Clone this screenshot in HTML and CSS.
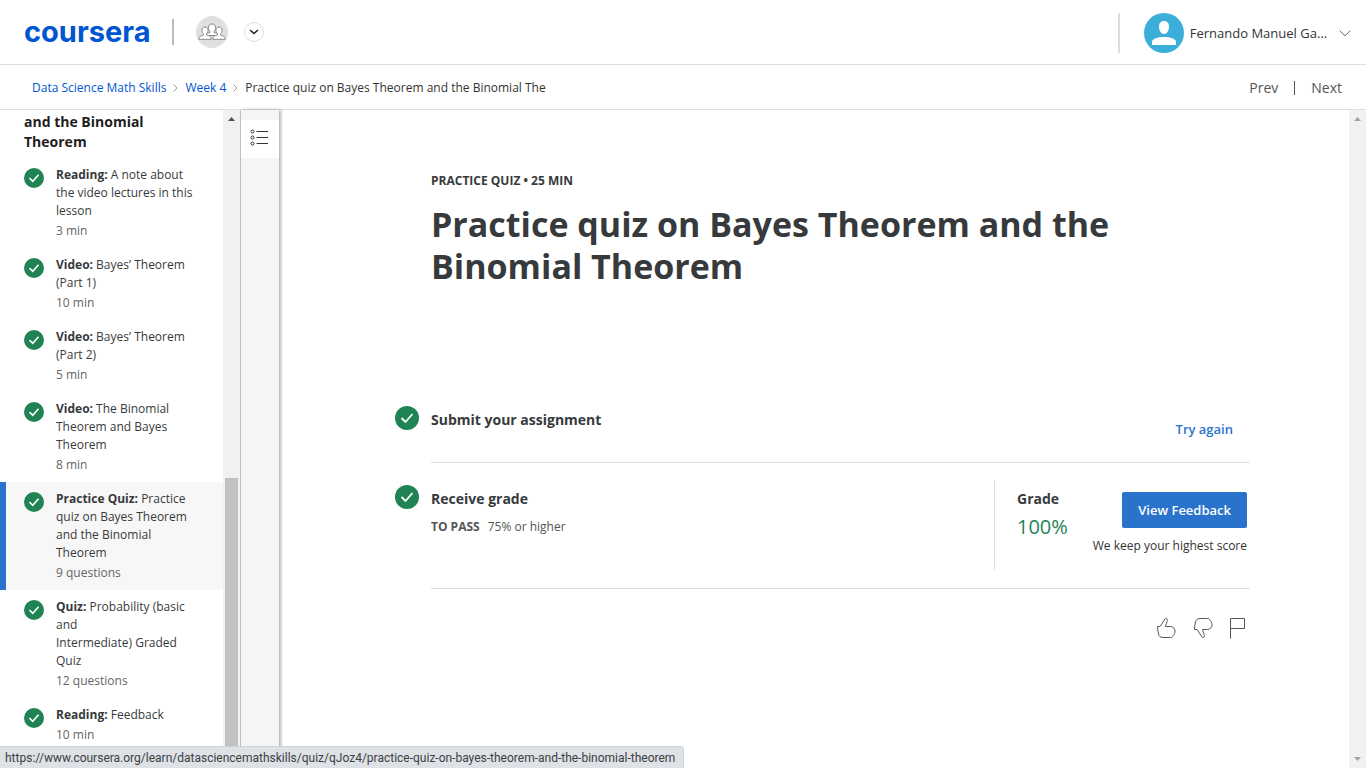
FILE: index.html
```html
<!DOCTYPE html>
<html lang="en">
<head>
<meta charset="utf-8">
<title>Practice quiz on Bayes Theorem and the Binomial Theorem | Coursera</title>
<link rel="stylesheet" href="styles.css">
</head>
<body>
<svg class="defs" aria-hidden="true">
  <symbol id="check" viewBox="0 0 24 24">
    <circle cx="12" cy="12" r="12" fill="#1f8354"/>
    <path d="M6.500 12l4 4 7-8" fill="none" stroke="#fff" stroke-width="1.800"/>
  </symbol>
</svg>
<header class="topbar">
  <a class="logo" href="#">coursera</a>
  <span class="topbar-rule"></span>
  <span class="group-badge">
    <svg width="28" height="18" viewBox="0 0 28 18" fill="#fff" stroke="#8a8a8a" stroke-width="1">
      <path d="M8 12.500c0-2 2-2.500 4-3v-1c-1-1-1.500-2-1.500-4 0-2.500 1.500-3.500 3.500-3.500s3.500 1 3.500 3.500c0 2-.5 3-1.500 4v1c2 .5 4 1 4 3z"/>
      <path d="M.8 16.300c0-3.200 2-3.600 4.700-4.300v-1.200C4.400 10 4 9 4 7.200 4 5 5.200 4 7 4s3 1 3 3.200c0 1.800-.4 2.800-1.500 3.600V12c2.700.7 4.700 1.100 4.700 4.300z"/>
      <path d="M14.800 16.300c0-3.200 2-3.600 4.700-4.300v-1.200C18.400 10 18 9 18 7.200 18 5 19.200 4 21 4s3 1 3 3.200c0 1.800-.4 2.800-1.500 3.600V12c2.700.7 4.700 1.100 4.700 4.300z"/>
    </svg>
  </span>
  <button class="switcher" type="button" aria-label="Switch program">
    <svg width="10" height="6" viewBox="0 0 10 6"><path d="M1 1l4 3.500L9 1" fill="none" stroke="#222" stroke-width="1.500"/></svg>
  </button>
  <button class="account" type="button">
    <svg class="avatar" width="40" height="40" viewBox="0 0 40 40">
      <circle cx="20" cy="20" r="20" fill="#3bafda"/>
      <path d="M20 8c3.500 0 5 2.500 5 5.500 0 4-2 7.500-5 7.500s-5-3.500-5-7.500C15 10.500 16.500 8 20 8zM8 32v-3c0-3.500 6-5 12-5s12 1.500 12 5v3z" fill="#fff"/>
    </svg>
    <span class="account-name">Fernando Manuel Ga…</span>
    <svg width="12" height="7" viewBox="0 0 12 7"><path d="M.7.7L6 5.800 11.300.7" fill="none" stroke="#666"/></svg>
  </button>
</header>

<div class="subbar">
  <nav class="crumbs" aria-label="Breadcrumb">
    <a href="#">Data Science Math Skills</a>
    <svg width="5" height="8" viewBox="0 0 5 8"><path d="M.5.500L4 4 .5 7.500" fill="none" stroke="#999"/></svg>
    <a href="#">Week 4</a>
    <svg width="5" height="8" viewBox="0 0 5 8"><path d="M.5.500L4 4 .5 7.500" fill="none" stroke="#999"/></svg>
    <span>Practice quiz on Bayes Theorem and the Binomial The</span>
  </nav>
  <nav class="pager" aria-label="Items">
    <a href="#">Prev</a><span class="pager-rule"></span><a href="#">Next</a>
  </nav>
</div>

<div class="workspace">
  <aside class="sidebar">
    <div class="lessons">
      <h2>and the Binomial Theorem</h2>
      <a class="item" href="#"><svg class="tick"><use href="#check"/></svg><span class="item-text"><b>Reading:</b> A note about the video lectures in this lesson<small>3 min</small></span></a>
      <a class="item" href="#"><svg class="tick"><use href="#check"/></svg><span class="item-text"><b>Video:</b> Bayes’ Theorem (Part 1)<small>10 min</small></span></a>
      <a class="item" href="#"><svg class="tick"><use href="#check"/></svg><span class="item-text"><b>Video:</b> Bayes’ Theorem (Part 2)<small>5 min</small></span></a>
      <a class="item" href="#"><svg class="tick"><use href="#check"/></svg><span class="item-text"><b>Video:</b> The Binomial Theorem and Bayes Theorem<small>8 min</small></span></a>
      <a class="item current" href="#" aria-current="page"><svg class="tick"><use href="#check"/></svg><span class="item-text"><b>Practice Quiz:</b> Practice quiz on Bayes Theorem and the Binomial Theorem<small>9 questions</small></span></a>
      <a class="item" href="#"><svg class="tick"><use href="#check"/></svg><span class="item-text"><b>Quiz:</b> Probability (basic and<br>Intermediate) Graded Quiz<small>12 questions</small></span></a>
      <a class="item" href="#"><svg class="tick"><use href="#check"/></svg><span class="item-text"><b>Reading:</b> Feedback<small>10 min</small></span></a>
    </div>
    <div class="scrollbar">
      <svg class="arrow dark" width="7" height="4" viewBox="0 0 7 4"><path d="M0 4L3.500 0 7 4z"/></svg>
      <span class="thumb"></span>
    </div>
  </aside>
  <div class="rail">
    <button type="button" aria-label="Toggle lesson list">
      <svg width="18" height="17" viewBox="0 0 18 17" fill="none" stroke="#333">
        <circle cx="2.500" cy="2.500" r="1.500"/><circle cx="2.500" cy="8.500" r="1.500"/><circle cx="2.500" cy="14.500" r="1.500"/>
        <path d="M6.500 2.500H18M6.500 8.500H18M6.500 14.500H18"/>
      </svg>
    </button>
  </div>
  <main class="content">
    <p class="kind">PRACTICE QUIZ • 25 MIN</p>
    <h1>Practice quiz on Bayes Theorem and the Binomial Theorem</h1>
    <section class="step submit">
      <svg class="step-tick"><use href="#check"/></svg>
      <h3>Submit your assignment</h3>
      <a class="again" href="#">Try again</a>
    </section>
    <section class="step grade-step">
      <svg class="step-tick"><use href="#check"/></svg>
      <div class="receive">
        <h3>Receive grade</h3>
        <p class="pass"><b>TO PASS</b><span>75% or higher</span></p>
      </div>
      <div class="grade">
        <div><h3>Grade</h3><p class="score">100%</p></div>
        <div class="feedback">
          <button type="button">View Feedback</button>
          <p>We keep your highest score</p>
        </div>
      </div>
    </section>
    <div class="reactions">
      <button type="button" aria-label="Like"><svg width="20" height="22" viewBox="0 0 20 22"><path d="M1.500 9.500H4L9 2c.6-1 2-.8 2.200.3.300 1.700-.2 3-1 4.700L9.500 9.500h5c2.500 0 4.500 2 4.500 4.700 0 1.500-.5 3-1.500 4l-1 1.500c-.5.700-1 .8-2 .8H7c-3 0-4-1.500-4.500-3.500-.6-2.500-1-5-1-7.500z"/></svg></button>
      <button type="button" aria-label="Dislike"><svg width="20" height="22" viewBox="0 0 20 22"><path d="M1.500 12.500H4L9 20c.6 1 2 .8 2.200-.3.300-1.700-.2-3-1-4.700L9.500 12.500h5c2.500 0 4.500-2 4.500-4.700 0-1.500-.5-3-1.500-4l-1-1.500c-.5-.7-1-.8-2-.8H7c-3 0-4 1.500-4.500 3.500-.6 2.500-1 5-1 7.500z"/></svg></button>
      <button type="button" aria-label="Report"><svg width="16" height="22" viewBox="0 0 16 22"><path d="M.5 21.500V1.500h14v10H.5"/></svg></button>
    </div>
  </main>
  <div class="scrollbar">
    <svg class="arrow" width="7" height="4" viewBox="0 0 7 4"><path d="M0 4L3.500 0 7 4z"/></svg>
    <svg class="arrow" width="7" height="4" viewBox="0 0 7 4"><path d="M0 0L3.500 4 7 0z"/></svg>
  </div>
</div>
<div class="status">https://www.coursera.org/learn/datasciencemathskills/quiz/qJoz4/practice-quiz-on-bayes-theorem-and-the-binomial-theorem</div>
</body>
</html>
```

FILE: styles.css
```css
* { box-sizing: border-box; }
body {
  margin: 0;
  height: 100vh;
  display: flex;
  flex-direction: column;
  overflow: hidden;
  background: #fff;
  color: #373a3c;
  font-family: "Open Sans", sans-serif;
  font-size: 12px;
  line-height: 18px;
}
h1, h2, h3, p { margin: 0; }
a { color: inherit; text-decoration: none; }
button { border: 0; padding: 0; background: none; font: inherit; color: inherit; cursor: pointer; }
svg { display: block; flex: none; }
.defs { position: absolute; width: 0; height: 0; }

.topbar {
  display: flex;
  align-items: center;
  flex: none;
  height: 65px;
  padding: 0 15px 0 24px;
  border-bottom: 1px solid #ddd;
}
.logo { color: #0056d2; font: 700 29px/36px Inter, sans-serif; }
.topbar-rule { width: 2px; height: 26px; margin: 0 22px; background: #bdbdbd; }
.group-badge {
  display: grid;
  place-items: center;
  width: 32px;
  height: 32px;
  border-radius: 50%;
  background: #e0e0e0;
}
.switcher {
  display: grid;
  place-items: center;
  width: 20px;
  height: 20px;
  margin-left: 16px;
  border: 1px solid #ddd;
  border-radius: 50%;
}
.account {
  display: flex;
  align-items: center;
  margin: 2px 0 0 auto;
  height: 40px;
  padding-left: 24px;
  border-left: 2px solid #ddd;
  font-size: 13px;
  color: #333;
}
.account-name {
  min-width: 134px;
  margin: 0 12px 0 6px;
  text-align: left;
  white-space: nowrap;
}

.subbar {
  display: flex;
  align-items: center;
  justify-content: space-between;
  flex: none;
  height: 45px;
  padding: 2px 24px 0 32px;
  border-bottom: 1px solid #ddd;
}
.crumbs { display: flex; align-items: center; gap: 7px; color: #333; }
.crumbs a { color: #0056d2; }
.pager { display: flex; align-items: center; font-size: 14px; color: #555; }
.pager-rule { width: 1px; height: 14px; margin: 0 16px; background: #555; }

.workspace { display: flex; flex: 1; min-height: 0; }
.sidebar { display: flex; flex: none; width: 241px; border-right: 1px solid #c4c4c4; }
.lessons { flex: 1; overflow: hidden; padding-top: 2px; }
.lessons h2 { padding: 0 56px 6px 24px; font-size: 14px; line-height: 20px; color: #1f1f1f; }
.item {
  display: flex;
  gap: 12px;
  padding: 8px 23px 8px 18px;
  border-left: 6px solid transparent;
}
.item.current { border-left-color: #2a73cc; background: #f7f7f7; }
.tick { width: 20px; height: 20px; margin-top: 2px; }
.item-text { flex: 1; }
.item small { display: block; padding-top: 2px; font-size: 12px; color: #666; }

.scrollbar {
  display: flex;
  flex-direction: column;
  align-items: center;
  justify-content: space-between;
  flex: none;
  width: 17px;
  padding: 7px 0;
  background: #f1f1f1;
}
.arrow { fill: #a3a3a3; }
.arrow.dark { fill: #505050; }
.thumb { width: 13px; height: 44%; background: #c1c1c1; }

.rail {
  flex: none;
  width: 38px;
  padding-top: 10px;
  background: #f5f5f5;
  box-shadow: 2px 0 3px rgba(0, 0, 0, .3);
}
.rail button { display: grid; place-items: center; width: 100%; height: 38px; padding: 0 3px 4px 0; background: #fff; }

.content { flex: 1; min-width: 0; padding: 62px 99px 0 116px; }
.kind { padding-left: 36px; font-weight: 700; }
h1 { padding: 13px 36px 0; font-size: 34px; line-height: 42px; }
h3 { font-size: 14px; line-height: 20px; }
.step { display: flex; margin-left: 36px; border-bottom: 1px solid #ddd; }
.step-tick { width: 24px; height: 24px; margin-left: -36px; margin-right: 12px; }
.submit { height: 57px; margin-top: 119px; }
.submit h3 { flex: 1; padding-top: 4px; }
.again { padding: 14px 17px 0 0; font-size: 13px; font-weight: 600; color: #2a73cc; }
.grade-step { padding: 17px 0 18px; }
.grade-step .step-tick { margin-top: 5px; }
.receive { flex: 1; padding-top: 9px; }
.pass { display: flex; gap: 8px; padding-top: 9px; color: #555; }
.grade {
  display: flex;
  justify-content: space-between;
  width: 256px;
  height: 90px;
  padding: 9px 3px 0 22px;
  border-left: 1px solid #ddd;
}
.score { padding-top: 4px; font-size: 20px; line-height: 28px; color: #1f8354; }
.feedback { display: flex; flex-direction: column; align-items: flex-end; padding-top: 3px; color: #333; }
.feedback button {
  height: 36px;
  padding: 0 16px;
  border-radius: 2px;
  background: #2a73cc;
  color: #fff;
  font-size: 13px;
  font-weight: 600;
}
.feedback p { padding-top: 9px; }
.reactions { display: flex; justify-content: flex-end; gap: 17px; padding: 28px 4px 0 0; }
.reactions path { fill: none; stroke: #525760; }

.status {
  position: fixed;
  left: 0;
  bottom: 0;
  height: 22px;
  padding: 2px 8px 0 5px;
  border: 1px solid #cfd2d6;
  border-width: 1px 1px 0 0;
  border-radius: 0 4px 0 0;
  background: #dee1e6;
  color: #3c4043;
  font-family: Roboto, sans-serif;
  white-space: nowrap;
}
```
